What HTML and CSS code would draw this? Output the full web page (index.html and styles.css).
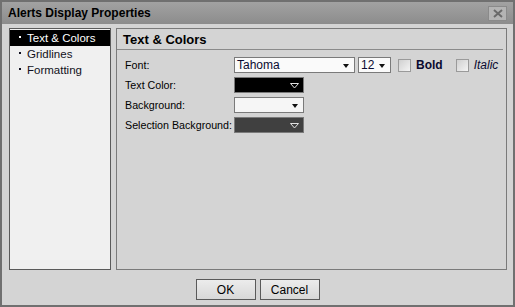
FILE: index.html
```html
<!DOCTYPE html>
<html lang="en">
<head>
  <meta charset="UTF-8">
  <title>Alerts Display Properties</title>
  <link rel="stylesheet" href="styles.css">
</head>
<body>
  <div class="dialog">
    <div class="titlebar">
      <span class="title">Alerts Display Properties</span>
      <span class="close">
        <svg width="10" height="9" viewBox="0 0 10 9"><path d="M1 1 L9 8 M9 1 L1 8" stroke="#6a6a6a" stroke-width="2"/></svg>
      </span>
    </div>
    <div class="content">
      <ul class="nav">
        <li class="active">Text &amp; Colors</li>
        <li>Gridlines</li>
        <li>Formatting</li>
      </ul>
      <div class="panel">
        <h2>Text &amp; Colors</h2>
        <div class="row">
          <label>Font:</label>
          <div class="combo font-name">Tahoma<span class="arrow dark"></span></div>
          <div class="combo font-size">12<span class="arrow dark"></span></div>
          <span class="check"></span><span class="bold">Bold</span>
          <span class="check"></span><span class="italic">Italic</span>
        </div>
        <div class="row">
          <label>Text Color:</label>
          <div class="swatch black">
            <svg class="hollow" width="9" height="6" viewBox="0 0 9 6"><polygon points="0.5,0.5 8.5,0.5 4.5,5" fill="none" stroke="#e0e0e0"/></svg>
          </div>
        </div>
        <div class="row">
          <label>Background:</label>
          <div class="swatch white"><span class="arrow dark"></span></div>
        </div>
        <div class="row">
          <label>Selection Background:</label>
          <div class="swatch grey">
            <svg class="hollow" width="9" height="6" viewBox="0 0 9 6"><polygon points="0.5,0.5 8.5,0.5 4.5,5" fill="none" stroke="#e0e0e0"/></svg>
          </div>
        </div>
      </div>
    </div>
    <div class="buttons">
      <button>OK</button>
      <button>Cancel</button>
    </div>
  </div>
</body>
</html>
```

FILE: styles.css
```css
body {
  margin: 0;
  font-family: "Liberation Sans", Arial, sans-serif;
  font-size: 11px;
  color: #000;
}
.dialog {
  width: 511px;
  height: 303px;
  border: 2px solid #707070;
  background: #d4d4d4;
  display: flex;
  flex-direction: column;
}
.titlebar {
  height: 22px;
  background: linear-gradient(#a2a2a2, #8c8c8c);
  display: flex;
  align-items: center;
  justify-content: space-between;
  padding: 0 6px 0 6px;
}
.title {
  font-weight: bold;
  font-size: 12px;
}
.close {
  width: 17px;
  height: 13px;
  border: 1px solid #8a8a8a;
  background: #b4b4b4;
  display: flex;
  align-items: center;
  justify-content: center;
}
.content {
  display: flex;
  gap: 5px;
  padding: 4px 6px 0 7px;
  height: 242px;
}
.nav {
  flex: none;
  list-style: none;
  margin: 0;
  padding: 1px 0 0;
  width: 100px;
  border: 1px solid #5a5a5a;
  background: #f0f0f0;
}
.nav li {
  height: 16px;
  line-height: 16px;
  padding-left: 9px;
  font-size: 11.5px;
  color: #101020;
}
.nav li::before {
  content: "";
  display: inline-block;
  width: 2px;
  height: 2px;
  background: currentColor;
  margin: 0 6px 3px 0;
  vertical-align: middle;
}
.nav li.active {
  background: #000;
  color: #fff;
}
.panel {
  flex: 1;
  border: 1px solid #7a7a7a;
  padding: 0 3px 0 0;
}
.panel h2 {
  margin: 0 0 5px;
  padding: 3px 0 2px 6px;
  font-size: 13px;
  font-weight: bold;
  border-bottom: 1px solid #8a8a8a;
  line-height: 15px;
}
.row {
  display: flex;
  align-items: center;
  height: 20px;
  padding-left: 8px;
}
.row label {
  flex: none;
  width: 109px;
  white-space: nowrap;
  font-size: 10.7px;
}
.combo {
  flex: none;
  position: relative;
  height: 14px;
  line-height: 14px;
  border: 1px solid #7a7a7a;
  background: #fafafa;
  padding-left: 2px;
  font-size: 12px;
  color: #0a0a30;
}
.font-name {
  width: 117px;
  margin-right: 3px;
}
.font-size {
  width: 29px;
  margin-right: 7px;
}
.check {
  flex: none;
  width: 11px;
  height: 11px;
  border: 1px solid #9a9a9a;
  background: linear-gradient(135deg, #d0d0d0, #f4f4f4);
  margin-right: 5px;
}
.bold {
  font-weight: bold;
  font-size: 12px;
  margin-right: 13px;
  color: #0a0a30;
}
.italic {
  font-style: italic;
  font-size: 12px;
  color: #0a0a30;
}
.swatch {
  flex: none;
  position: relative;
  width: 68px;
  height: 14px;
  border: 1px solid #7a7a7a;
}
.swatch.black { background: #000; }
.swatch.white { background: #f6f6f6; }
.swatch.grey { background: #404040; }
.arrow {
  position: absolute;
  right: 5px;
  top: 6px;
  width: 0;
  height: 0;
  border-left: 3px solid transparent;
  border-right: 3px solid transparent;
  border-top: 4px solid #111;
}
.hollow {
  position: absolute;
  right: 4px;
  top: 5px;
}
.buttons {
  display: flex;
  justify-content: center;
  gap: 4px;
  margin-top: 9px;
}
.buttons button {
  width: 60px;
  height: 21px;
  font-family: "Liberation Sans", Arial, sans-serif;
  font-size: 12px;
  border: 1px solid #5a5a5a;
  background: linear-gradient(#ececec, #d8d8d8);
  padding: 0;
}
```
